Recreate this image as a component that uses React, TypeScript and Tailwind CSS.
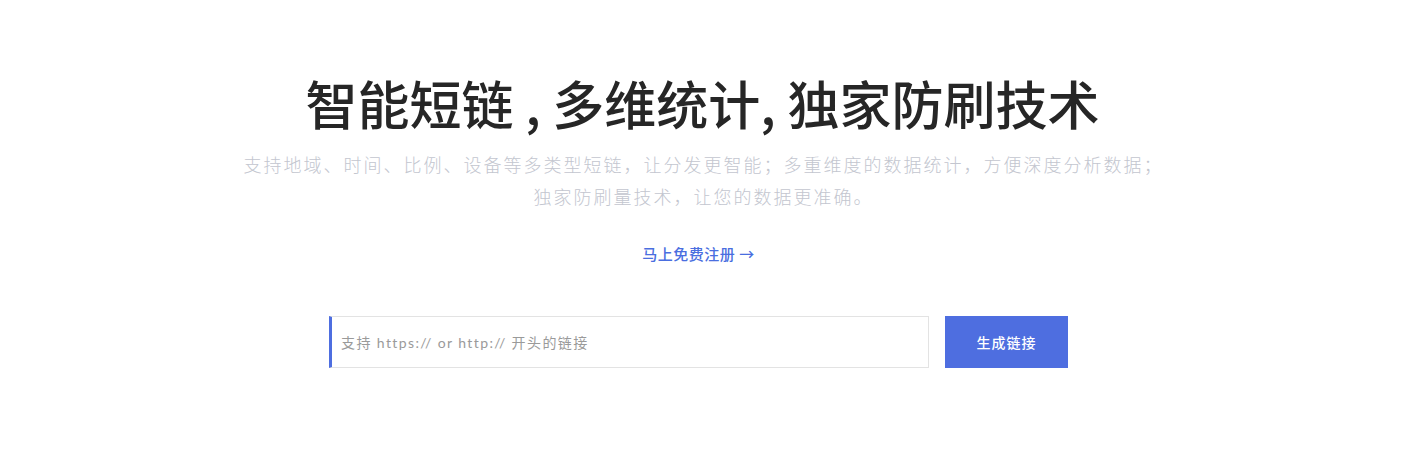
import React from "react";

export default function App() {
  return (
    <div
      className="w-full h-[460px] bg-white flex flex-col items-center pr-[22px]"
      style={{ fontFamily: "'Noto Sans CJK SC', 'Noto Sans', sans-serif" }}
    >
      <h1 className="mt-[70px] ml-[8px] text-[52px] leading-[66px] font-medium text-[#262626] whitespace-nowrap">
        智能短链 , 多维统计, 独家防刷技术
      </h1>
      <p className="mt-[12px] ml-[10px] text-[18px] leading-[32px] text-[#c3c6cf] tracking-[2px] text-center w-[930px] font-light">
        支持地域、时间、比例、设备等多类型短链，让分发更智能；多重维度的数据统计，方便深度分析数据；独家防刷量技术，让您的数据更准确。
      </p>
      <a className="mt-[31px] text-[15px] leading-[22px] text-[#4a6ee0] font-medium tracking-[0.5px] cursor-pointer">
        马上免费注册 →
      </a>
      <div className="mt-[51px] flex items-center gap-[16px]">
        <div className="w-[600px] h-[52px] border border-[#e3e3e3] border-l-[3px] border-l-[#4e6ee0] flex items-center pl-[9px]">
          <input
            className="w-full h-full outline-none text-[14px] text-[#333] tracking-[1.4px] placeholder:text-[#9a9a9a]"
            style={{ fontFamily: "Lato, 'Noto Sans CJK SC', sans-serif" }}
            placeholder="支持 https:// or http:// 开头的链接"
          />
        </div>
        <button className="w-[123px] h-[52px] bg-[#4e6ee0] text-white text-[14px] font-medium tracking-[1px]">
          生成链接
        </button>
      </div>
    </div>
  );
}
